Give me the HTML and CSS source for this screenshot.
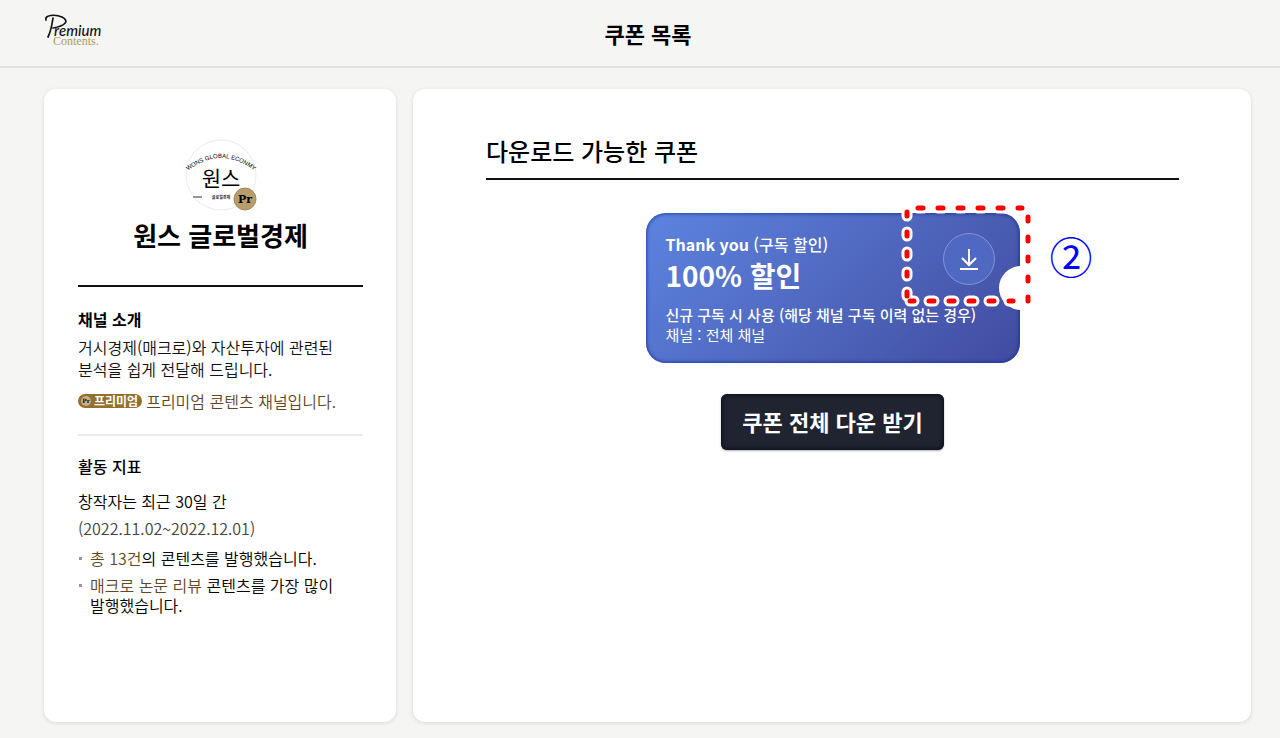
FILE: index.html
```html
<!DOCTYPE html>
<html lang="ko">
<head>
<meta charset="utf-8">
<meta name="viewport" content="width=device-width, initial-scale=1">
<title>쿠폰 목록</title>
<link rel="stylesheet" href="styles.css">
</head>
<body>
<header class="topbar">
  <a class="logo" href="#" aria-label="Premium Contents">
    <svg width="64" height="40" viewBox="0 0 64 40" aria-hidden="true">
      <path d="M2 7C0 2 11 1 18 4c8 4 3 9-9 11M9 5C8 12 7 18 4 24" fill="none" stroke="#111" stroke-width="1.7" stroke-linecap="round"/>
      <text class="logo-script" x="10" y="23">remium</text>
      <text class="logo-serif" x="9" y="32">Contents.</text>
    </svg>
  </a>
  <h1 class="page-title">쿠폰 목록</h1>
</header>
<main class="layout">
  <aside class="card profile">
    <div class="avatar">
      <svg width="74" height="74" viewBox="0 0 74 74" role="img" aria-label="원스 글로벌경제">
        <defs><path id="arc" d="M1 34Q37 4 73 34"/></defs>
        <circle cx="37" cy="36" r="35" fill="#fff" stroke="#ececec"/>
        <text class="av-arc"><textPath href="#arc" startOffset="50%">WONS GLOBAL ECONMY</textPath></text>
        <text class="av-name" x="37" y="47">원스</text>
        <path d="M9 58h9" stroke="#333"/>
        <text class="av-sub" x="37" y="60">글로벌경제</text>
        <circle cx="61" cy="60" r="11" fill="#b69d6b" stroke="#a68b56"/>
        <text class="av-pr" x="61" y="64">Pr</text>
      </svg>
    </div>
    <h2 class="channel-name">원스 글로벌경제</h2>
    <section class="intro">
      <h3 class="label">채널 소개</h3>
      <p class="intro-text">거시경제(매크로)와 자산투자에 관련된 분석을 쉽게 전달해 드립니다.</p>
      <p class="premium"><span class="tag"><span class="tag-dot">Pr</span>프리미엄</span>프리미엄 콘텐츠 채널입니다.</p>
    </section>
    <section class="stats">
      <h3 class="label">활동 지표</h3>
      <p class="period">창작자는 최근 30일 간<br><span class="dates">(2022.11.02~2022.12.01)</span></p>
      <ul class="facts">
        <li><span class="gold">총 13건</span>의 콘텐츠를 발행했습니다.</li>
        <li><span class="gold">매크로 논문 리뷰</span> 콘텐츠를 가장 많이 발행했습니다.</li>
      </ul>
    </section>
  </aside>
  <section class="card coupons">
    <h2 class="section-title">다운로드 가능한 쿠폰</h2>
    <div class="coupon-wrap">
      <article class="coupon">
        <div class="coupon-head">
          <div>
            <h3 class="coupon-name"><b>Thank you</b> (구독 할인)</h3>
            <p class="amount">100% 할인</p>
          </div>
          <button class="download" type="button" aria-label="쿠폰 다운로드">
            <svg width="20" height="24" viewBox="0 0 20 24" fill="none" stroke="#fff" stroke-width="2" aria-hidden="true">
              <path d="M10 2v16M3 11l7 7 7-7M1 22h18"/>
            </svg>
          </button>
        </div>
        <p class="condition">신규 구독 시 사용 (해당 채널 구독 이력 없는 경우)</p>
        <p class="scope">채널 : 전체 채널</p>
      </article>
      <svg class="marker" width="136" height="112" viewBox="0 0 136 112" fill="none" stroke-linecap="round" aria-hidden="true">
        <defs>
          <path id="dashes" d="M7 12v4M7 32v4M7 52v4M7 72v4M7 92v4M10 101h4M29 101h5M49 101h5M69 101h5M89 101h5M109 101h4M18 8h5M38 8h5M58 8h5M78 8h5M98 8h5M118 8h4M128 17v4M128 37v4M128 57v4M128 77v4M128 97v4"/>
        </defs>
        <use href="#dashes" stroke="#fff" stroke-width="11"/>
        <use href="#dashes" stroke="#f00" stroke-width="5"/>
      </svg>
      <span class="step">②</span>
    </div>
    <button class="download-all" type="button">쿠폰 전체 다운 받기</button>
  </section>
</main>
</body>
</html>
```
FILE: styles.css
```css
* { box-sizing: border-box; margin: 0; padding: 0; }
body {
  min-height: 100vh;
  display: flex;
  flex-direction: column;
  background: #f5f5f3;
  color: #000;
  font: 16px/22px "Noto Sans CJK KR", sans-serif;
  word-break: keep-all;
}
button { font: inherit; cursor: pointer; }
.topbar {
  display: grid;
  grid-template-columns: 1fr auto 1fr;
  align-items: center;
  height: 68px;
  padding: 0 28px 0 44px;
  border-bottom: 2px solid #e2e2e0;
}
.logo { display: block; height: 40px; }
.logo-script { font: italic 500 15px "Lato", sans-serif; fill: #111; }
.logo-serif { font: 12px "Liberation Serif", serif; fill: #a8a060; }
.page-title { font-size: 22px; line-height: 30px; font-weight: 700; }
.layout {
  flex: 1;
  display: grid;
  grid-template-columns: 352px 1fr;
  gap: 17px;
  padding: 21px 29px 16px 44px;
}
.card {
  background: #fff;
  border-radius: 12px;
  box-shadow: 0 1px 4px rgba(0, 0, 0, .12);
}
.profile { padding: 50px 33px 24px 34px; }
.avatar { display: flex; justify-content: center; height: 72px; }
.av-arc { font: 6px "Liberation Sans", sans-serif; text-anchor: middle; }
.av-name { font: 21px "Noto Sans CJK KR", sans-serif; text-anchor: middle; }
.av-sub { font: 700 4px "Noto Sans CJK KR", sans-serif; text-anchor: middle; fill: #333; }
.av-pr { font: 700 11px "DejaVu Serif", serif; text-anchor: middle; }
.channel-name {
  padding: 4px 0 30px;
  font-size: 26px;
  line-height: 40px;
  text-align: center;
  border-bottom: 2px solid #111;
}
.label { font-size: 16px; line-height: 24px; font-weight: 500; }
.intro { padding: 20px 0 21px; border-bottom: 2px solid #ebebeb; }
.intro .label { font-weight: 700; }
.intro-text { margin-top: 5px; color: #111; font-weight: 350; }
.premium {
  display: flex;
  align-items: center;
  gap: 4px;
  margin-top: 9px;
  line-height: 24px;
  color: #5f4824;
  font-weight: 350;
}
.tag {
  display: flex;
  align-items: center;
  gap: 3px;
  height: 14px;
  padding: 0 4px 0 3px;
  border-radius: 7px;
  background: #94702f;
  color: #fff;
  font-size: 12px;
  line-height: 14px;
  font-weight: 700;
}
.tag-dot {
  width: 10px;
  height: 10px;
  border-radius: 50%;
  background: #c7b287;
  color: #111;
  font: 700 6px/10px "DejaVu Serif", serif;
  text-align: center;
}
.stats { padding-top: 18px; }
.period { margin-top: 10px; line-height: 27px; font-weight: 350; }
.dates { color: #444; }
.facts {
  display: grid;
  gap: 7px;
  margin-top: 6px;
  list-style: none;
  line-height: 20px;
  font-weight: 350;
}
.facts li { position: relative; padding-left: 12px; }
.facts li::before {
  content: "";
  position: absolute;
  left: 1px;
  top: 9px;
  width: 3px;
  height: 3px;
  background: #999;
}
.gold { color: #5f4824; }
.coupons {
  display: flex;
  flex-direction: column;
  align-items: center;
  padding: 44px 72px 24px 73px;
}
.section-title {
  align-self: stretch;
  padding-bottom: 9px;
  border-bottom: 2px solid #111;
  font-size: 24px;
  line-height: 36px;
  font-weight: 500;
}
.coupon-wrap { position: relative; width: 374px; margin-top: 33px; }
.coupon {
  position: relative;
  overflow: hidden;
  padding: 19px 25px 18px 20px;
  border-radius: 20px;
  background: linear-gradient(135deg, #5c84df, #5068c0 50%, #404b9f);
  box-shadow: inset 0 0 4px #0a2590;
  color: #fff;
}
.coupon::after {
  content: "";
  position: absolute;
  top: 53px;
  right: -23px;
  width: 44px;
  height: 44px;
  border-radius: 50%;
  background: #fff;
}
.coupon-head { display: flex; justify-content: space-between; align-items: flex-start; }
.coupon-name { font-size: 16px; line-height: 24px; font-weight: 500; }
.amount { font-size: 28px; line-height: 39px; font-weight: 700; }
.download {
  display: grid;
  place-items: center;
  width: 52px;
  height: 52px;
  margin-top: 1px;
  border: 1px solid #8494d2;
  border-radius: 50%;
  background: #4f69c2;
}
.condition { margin-top: 10px; font-size: 15px; line-height: 20px; font-weight: 500; white-space: nowrap; }
.scope { font-size: 15px; line-height: 20px; }
.marker { position: absolute; left: 254px; top: -13px; }
.step {
  position: absolute;
  left: 404px;
  top: 18px;
  color: #00f;
  font-size: 43px;
  line-height: 48px;
  font-weight: 400;
}
.download-all {
  height: 56px;
  margin-top: 31px;
  padding: 0 21px 2px;
  border: 0;
  border-radius: 6px;
  background: #202431;
  box-shadow: inset 0 0 5px #00000f, 0 1px 2px rgba(0, 0, 0, .3);
  color: #fff;
  font-size: 22px;
  font-weight: 700;
}
```
